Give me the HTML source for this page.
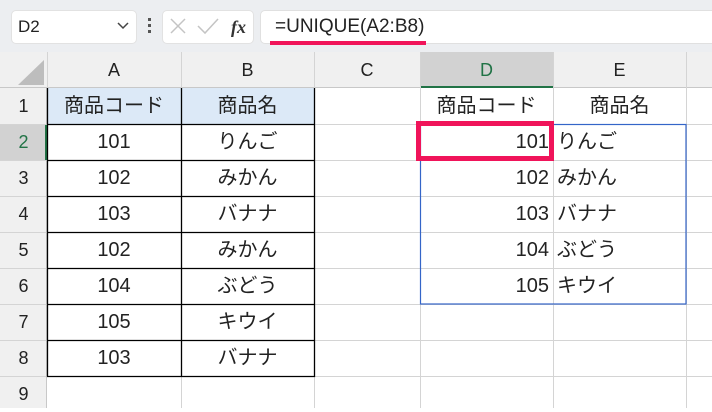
<!DOCTYPE html>
<html><head><meta charset="utf-8"><style>
*{margin:0;padding:0;box-sizing:border-box}
body{width:712px;height:408px;overflow:hidden;background:#fff;position:relative;font-family:"Liberation Sans","Noto Sans CJK JP",sans-serif;color:#222}
.a{position:absolute}
.t{position:absolute;font-size:20px;line-height:36px;white-space:nowrap}
.hl{position:absolute;background:#d4d4d4}
</style></head><body>
<div class="a" style="left:0;top:0;width:712px;height:52px;background:#eceef1"></div>
<div class="a" style="left:11px;top:10px;width:126px;height:34px;background:#fff;border:1px solid #e2e2e2;border-radius:5px"></div>
<div class="t" style="left:18px;top:9px;font-size:17px">D2</div>
<svg class="a" style="left:117px;top:22px" width="12" height="8"><path d="M1 1 L6 6 L11 1" stroke="#444" stroke-width="1.5" fill="none"/></svg>
<div class="a" style="left:148px;top:18px;width:3px;height:3px;background:#555"></div>
<div class="a" style="left:148px;top:24px;width:3px;height:3px;background:#555"></div>
<div class="a" style="left:148px;top:30px;width:3px;height:3px;background:#555"></div>
<div class="a" style="left:162px;top:10px;width:92px;height:34px;background:#fff;border:1px solid #e2e2e2;border-radius:5px"></div>
<svg class="a" style="left:168px;top:16px" width="60" height="22"><path d="M3 3 L17 17 M17 3 L3 17" stroke="#c4c4c4" stroke-width="1.5"/><path d="M30 10 L37 17 L50 3" stroke="#c4c4c4" stroke-width="1.5" fill="none"/></svg>
<div class="t" style="left:231px;top:9px;font-size:18px;font-style:italic;font-family:'Liberation Serif',serif;font-weight:bold;color:#333">fx</div>
<div class="a" style="left:260px;top:10px;width:460px;height:34px;background:#fff;border:1px solid #e0e0e0;border-radius:5px"></div>
<div class="t" style="left:275px;top:9px;font-size:19px;color:#222">=UNIQUE(A2:B8)</div>
<div class="a" style="left:270px;top:41px;width:156px;height:4px;background:#f0145a"></div>
<!-- headers -->
<div class="a" style="left:0;top:52px;width:712px;height:36px;background:#f0f0f0;border-bottom:1px solid #c8c8c8"></div>
<div class="a" style="left:0;top:88px;width:47px;height:320px;background:#f0f0f0;border-right:1px solid #c8c8c8"></div>
<svg class="a" style="left:16px;top:58px" width="30" height="28"><path d="M28 2 L28 27 L2 27 Z" fill="#bdbdbd"/></svg>
<div class="a" style="left:420px;top:52px;width:133px;height:36px;background:#d2d2d2;border-bottom:2px solid #217346"></div>
<div class="a" style="left:0;top:124px;width:47px;height:36px;background:#d2d2d2;border-right:2px solid #217346"></div>
<div class="hl" style="left:47px;top:52px;width:1px;height:36px"></div>
<div class="hl" style="left:181px;top:52px;width:1px;height:36px"></div>
<div class="hl" style="left:314px;top:52px;width:1px;height:36px"></div>
<div class="hl" style="left:420px;top:52px;width:1px;height:36px"></div>
<div class="hl" style="left:553px;top:52px;width:1px;height:36px"></div>
<div class="hl" style="left:686px;top:52px;width:1px;height:36px"></div>
<div class="t" style="left:47px;top:52px;width:134px;text-align:center;font-size:18px">A</div>
<div class="t" style="left:181px;top:52px;width:133px;text-align:center;font-size:18px">B</div>
<div class="t" style="left:314px;top:52px;width:106px;text-align:center;font-size:18px">C</div>
<div class="t" style="left:420px;top:52px;width:133px;text-align:center;font-size:18px;color:#217346">D</div>
<div class="t" style="left:553px;top:52px;width:133px;text-align:center;font-size:18px">E</div>
<!-- row numbers and gridlines -->
<div id="rows"></div>
<div class="hl" style="left:47px;top:124px;width:665px;height:1px"></div>
<div class="hl" style="left:0;top:124px;width:712px;height:1px"></div>
<div class="hl" style="left:0;top:160px;width:712px;height:1px"></div>
<div class="hl" style="left:0;top:196px;width:712px;height:1px"></div>
<div class="hl" style="left:0;top:232px;width:712px;height:1px"></div>
<div class="hl" style="left:0;top:268px;width:712px;height:1px"></div>
<div class="hl" style="left:0;top:304px;width:712px;height:1px"></div>
<div class="hl" style="left:0;top:340px;width:712px;height:1px"></div>
<div class="hl" style="left:0;top:376px;width:712px;height:1px"></div>
<div class="hl" style="left:314px;top:88px;width:1px;height:320px"></div>
<div class="hl" style="left:420px;top:88px;width:1px;height:320px"></div>
<div class="hl" style="left:553px;top:88px;width:1px;height:320px"></div>
<div class="hl" style="left:686px;top:88px;width:1px;height:320px"></div>
<div class="hl" style="left:181px;top:376px;width:1px;height:32px"></div>
<div class="t" style="left:0;top:88px;width:47px;text-align:center;font-size:18px">1</div>
<div class="t" style="left:0;top:124px;width:47px;text-align:center;font-size:18px;color:#217346">2</div>
<div class="t" style="left:0;top:160px;width:47px;text-align:center;font-size:18px">3</div>
<div class="t" style="left:0;top:196px;width:47px;text-align:center;font-size:18px">4</div>
<div class="t" style="left:0;top:232px;width:47px;text-align:center;font-size:18px">5</div>
<div class="t" style="left:0;top:268px;width:47px;text-align:center;font-size:18px">6</div>
<div class="t" style="left:0;top:304px;width:47px;text-align:center;font-size:18px">7</div>
<div class="t" style="left:0;top:340px;width:47px;text-align:center;font-size:18px">8</div>
<div class="t" style="left:0;top:376px;width:47px;text-align:center;font-size:18px">9</div>
<!-- table A:B -->
<div class="a" style="left:47px;top:88px;width:267px;height:36px;background:#dce9f7"></div>
<svg class="a" style="left:0;top:0" width="712" height="408">
<g stroke="#000" stroke-width="1.3" fill="none">
<path d="M47.5 88 V376.5 H314.5 V88 M181.5 88 V376.5 M47 124.5 H314 M47 160.5 H314 M47 196.5 H314 M47 232.5 H314 M47 268.5 H314 M47 304.5 H314 M47 340.5 H314"/>
</g>
<rect x="420.5" y="124.5" width="265.5" height="179.5" fill="none" stroke="#3465c8" stroke-width="1.2"/>
<rect x="418.5" y="123.5" width="133" height="35" fill="none" stroke="#f0145a" stroke-width="5"/>
</svg>
<div class="t" style="left:47px;top:88px;width:134px;text-align:center">商品コード</div>
<div class="t" style="left:181px;top:88px;width:133px;text-align:center">商品名</div>
<div class="t" style="left:47px;top:124px;width:134px;text-align:center">101</div>
<div class="t" style="left:47px;top:160px;width:134px;text-align:center">102</div>
<div class="t" style="left:47px;top:196px;width:134px;text-align:center">103</div>
<div class="t" style="left:47px;top:232px;width:134px;text-align:center">102</div>
<div class="t" style="left:47px;top:268px;width:134px;text-align:center">104</div>
<div class="t" style="left:47px;top:304px;width:134px;text-align:center">105</div>
<div class="t" style="left:47px;top:340px;width:134px;text-align:center">103</div>
<div class="t" style="left:181px;top:124px;width:133px;text-align:center">りんご</div>
<div class="t" style="left:181px;top:160px;width:133px;text-align:center">みかん</div>
<div class="t" style="left:181px;top:196px;width:133px;text-align:center">バナナ</div>
<div class="t" style="left:181px;top:232px;width:133px;text-align:center">みかん</div>
<div class="t" style="left:181px;top:268px;width:133px;text-align:center">ぶどう</div>
<div class="t" style="left:181px;top:304px;width:133px;text-align:center">キウイ</div>
<div class="t" style="left:181px;top:340px;width:133px;text-align:center">バナナ</div>
<!-- D:E -->
<div class="t" style="left:420px;top:88px;width:133px;text-align:center">商品コード</div>
<div class="t" style="left:553px;top:88px;width:133px;text-align:center">商品名</div>
<div class="t" style="left:420px;top:124px;width:129px;text-align:right">101</div>
<div class="t" style="left:420px;top:160px;width:129px;text-align:right">102</div>
<div class="t" style="left:420px;top:196px;width:129px;text-align:right">103</div>
<div class="t" style="left:420px;top:232px;width:129px;text-align:right">104</div>
<div class="t" style="left:420px;top:268px;width:129px;text-align:right">105</div>
<div class="t" style="left:557px;top:124px">りんご</div>
<div class="t" style="left:557px;top:160px">みかん</div>
<div class="t" style="left:557px;top:196px">バナナ</div>
<div class="t" style="left:557px;top:232px">ぶどう</div>
<div class="t" style="left:557px;top:268px">キウイ</div>
</body></html>
